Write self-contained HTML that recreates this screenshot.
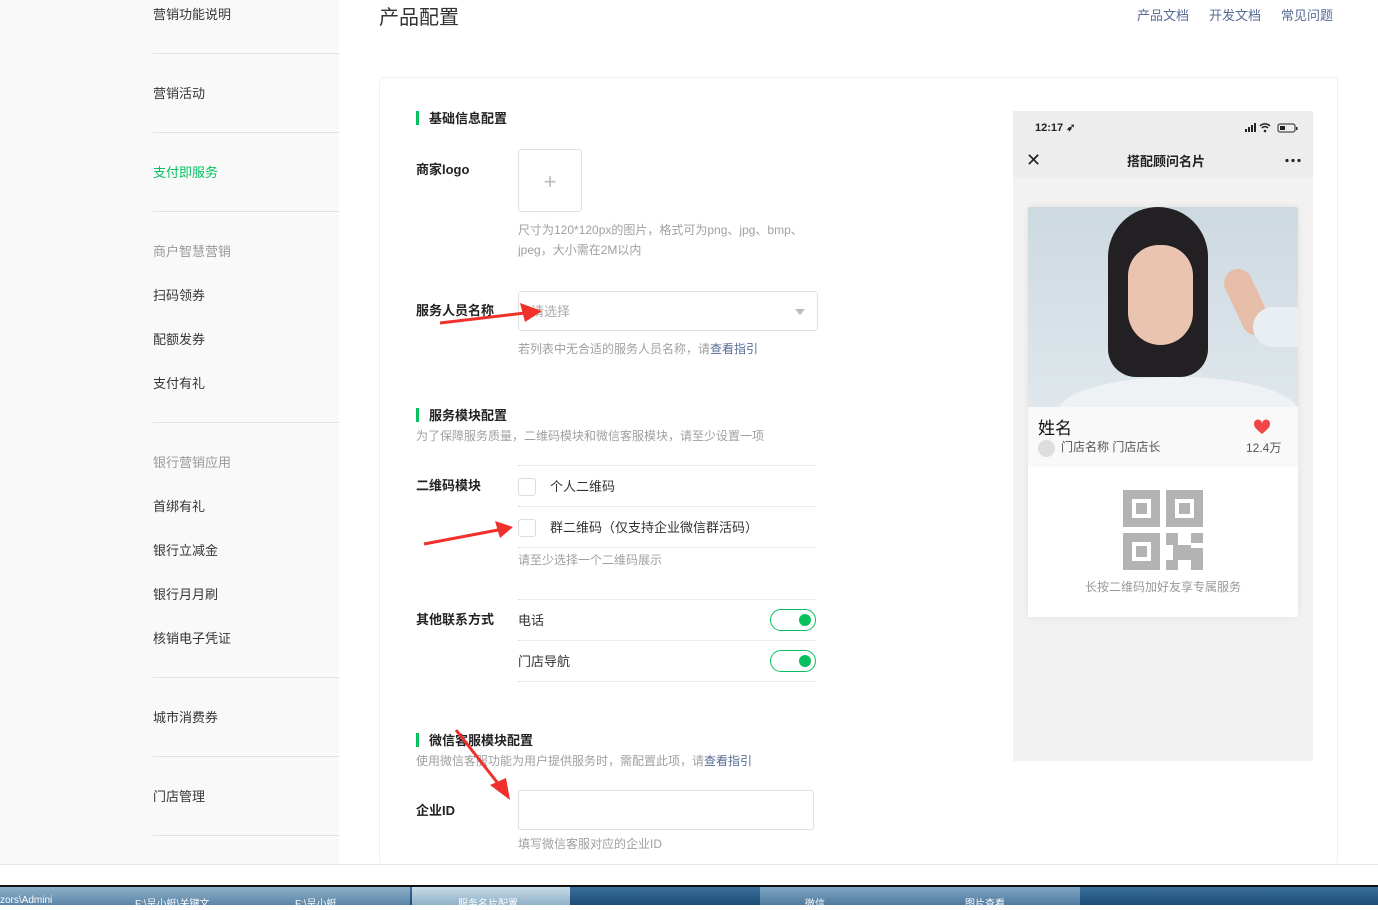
<!DOCTYPE html>
<html><head><meta charset="utf-8"><style>
*{margin:0;padding:0;box-sizing:border-box}
body{width:1378px;height:905px;overflow:hidden;background:#fff;font-family:"Liberation Sans","Noto Sans CJK SC",sans-serif;font-size:13px;color:#333;position:relative}
.a{position:absolute;white-space:nowrap}
.side{position:absolute;left:0;top:0;width:339px;height:864px;background:#f9f9f9}
.sl{position:absolute;left:153px;width:186px;height:1px;background:#e2e2e2}
.si{position:absolute;left:153px;font-size:13px;color:#353535;margin-top:-2px}
.g{color:#999}
.h{font-weight:bold;color:#222;font-size:13px;margin-top:-2px}
.bar{position:absolute;width:3px;height:14px;background:#07c160}
.tip{font-size:12px;color:#a0a0a0;margin-top:-2px}
.lk{color:#576b95}
.dl{position:absolute;left:518px;width:298px;border-top:1px dotted #ddd}
.cb{position:absolute;left:518px;width:18px;height:18px;border:1px solid #ddd;border-radius:3px;background:#fff}
.sw{position:absolute;left:770px;width:46px;height:22px;border:1.5px solid #07c160;border-radius:11px;background:#fff}
.sw:after{content:"";position:absolute;right:4px;top:4px;width:12px;height:12px;border-radius:50%;background:#07c160}
.t{margin-top:-2px}
</style></head><body>
<div class="side"></div>
<div class="si" style="top:6px">营销功能说明</div>
<div class="sl" style="top:53px"></div>
<div class="si" style="top:85px">营销活动</div>
<div class="sl" style="top:132px"></div>
<div class="si" style="top:164px;color:#07c160">支付即服务</div>
<div class="sl" style="top:211px"></div>
<div class="si g" style="top:243px">商户智慧营销</div>
<div class="si" style="top:287px">扫码领券</div>
<div class="si" style="top:331px">配额发券</div>
<div class="si" style="top:375px">支付有礼</div>
<div class="sl" style="top:422px"></div>
<div class="si g" style="top:454px">银行营销应用</div>
<div class="si" style="top:498px">首绑有礼</div>
<div class="si" style="top:542px">银行立减金</div>
<div class="si" style="top:586px">银行月月刷</div>
<div class="si" style="top:630px">核销电子凭证</div>
<div class="sl" style="top:677px"></div>
<div class="si" style="top:709px">城市消费券</div>
<div class="sl" style="top:756px"></div>
<div class="si" style="top:788px">门店管理</div>
<div class="sl" style="top:835px"></div>

<div class="a" style="left:379px;top:1px;font-size:20px;color:#333">产品配置</div>
<div class="a lk" style="left:1137px;top:5px">产品文档</div>
<div class="a lk" style="left:1209px;top:5px">开发文档</div>
<div class="a lk" style="left:1281px;top:5px">常见问题</div>

<div style="position:absolute;left:379px;top:77px;width:959px;height:787px;border:1px solid #f0f0f0;border-radius:4px;border-bottom:none"></div>

<div class="bar" style="left:416px;top:111px"></div>
<div class="a h" style="left:429px;top:110px">基础信息配置</div>
<div class="a h" style="left:416px;top:161px">商家logo</div>
<div style="position:absolute;left:518px;top:149px;width:64px;height:63px;border:1px solid #e0e0e0;border-radius:3px;color:#bbb;font-size:22px;text-align:center;line-height:64px;font-weight:300">+</div>
<div class="a tip" style="left:518px;top:222px;line-height:20px">尺寸为120*120px的图片，格式可为png、jpg、bmp、<br>jpeg，大小需在2M以内</div>
<div class="a h" style="left:416px;top:302px">服务人员名称</div>
<div style="position:absolute;left:518px;top:291px;width:300px;height:40px;border:1px solid #e0e0e0;border-radius:3px"></div>
<div class="a t" style="left:531px;top:303px;color:#aaa">请选择</div>
<div class="a" style="left:795px;top:309px;border-left:5px solid transparent;border-right:5px solid transparent;border-top:6px solid #bbb"></div>
<div class="a tip" style="left:518px;top:342px">若列表中无合适的服务人员名称，请<span class="lk">查看指引</span></div>

<div class="bar" style="left:416px;top:408px"></div>
<div class="a h" style="left:429px;top:407px">服务模块配置</div>
<div class="a tip" style="left:416px;top:429px">为了保障服务质量，二维码模块和微信客服模块，请至少设置一项</div>
<div class="dl" style="top:465px"></div>
<div class="a h" style="left:416px;top:477px">二维码模块</div>
<div class="cb" style="top:478px"></div>
<div class="a t" style="left:550px;top:478px">个人二维码</div>
<div class="dl" style="top:506px"></div>
<div class="cb" style="top:519px"></div>
<div class="a t" style="left:550px;top:519px">群二维码（仅支持企业微信群活码）</div>
<div class="dl" style="top:547px"></div>
<div class="a tip" style="left:518px;top:553px">请至少选择一个二维码展示</div>
<div class="dl" style="top:599px"></div>
<div class="a h" style="left:416px;top:611px">其他联系方式</div>
<div class="a t" style="left:518px;top:612px">电话</div>
<div class="sw" style="top:609px"></div>
<div class="dl" style="top:640px"></div>
<div class="a t" style="left:518px;top:653px">门店导航</div>
<div class="sw" style="top:650px"></div>
<div class="dl" style="top:681px"></div>

<div class="bar" style="left:416px;top:733px"></div>
<div class="a h" style="left:429px;top:732px">微信客服模块配置</div>
<div class="a tip" style="left:416px;top:754px">使用微信客服功能为用户提供服务时，需配置此项，请<span class="lk">查看指引</span></div>
<div class="a h" style="left:416px;top:802px">企业ID</div>
<div style="position:absolute;left:518px;top:790px;width:296px;height:40px;border:1px solid #e0e0e0;border-radius:3px"></div>
<div class="a tip" style="left:518px;top:837px">填写微信客服对应的企业ID</div>

<svg class="a" style="left:0;top:0" width="1378" height="905">
<g fill="#f0302a" stroke="#f0302a">
<line x1="440" y1="323" x2="525" y2="313" stroke-width="3"/><polygon points="520,303 542,311 525,322" stroke="none"/>
<line x1="424" y1="544" x2="498" y2="530" stroke-width="3"/><polygon points="495,521 513,527 500,538" stroke="none"/>
<line x1="456" y1="730" x2="500" y2="786" stroke-width="3"/><polygon points="490,785 510,800 506,778" stroke="none"/>
</g></svg>

<!-- phone -->
<div style="position:absolute;left:1013px;top:111px;width:300px;height:650px;background:#f2f2f2"></div>
<div style="position:absolute;left:1013px;top:111px;width:300px;height:66px;background:#ededed"></div>
<div class="a" style="left:1035px;top:121px;font-size:11px;font-weight:bold;color:#222">12:17 ➶</div>
<svg class="a" style="left:1244px;top:122px" width="56" height="12">
<rect x="1" y="7" width="2" height="3" fill="#222"/><rect x="4" y="5" width="2" height="5" fill="#222"/><rect x="7" y="3" width="2" height="7" fill="#222"/><rect x="10" y="1" width="2" height="9" fill="#222"/>
<path d="M16 4a7 7 0 0 1 10 0M18 6a4 4 0 0 1 6 0" stroke="#222" stroke-width="1.5" fill="none"/><circle cx="21" cy="9" r="1.3" fill="#222"/>
<rect x="34" y="2" width="17" height="8" rx="2" stroke="#222" fill="none"/><rect x="36" y="4" width="5" height="4" fill="#222"/><rect x="52" y="5" width="1.5" height="3" fill="#222"/>
</svg>
<div class="a" style="left:1026px;top:150px;font-size:18px;color:#222">✕</div>
<div class="a" style="left:1127px;top:151px;font-weight:bold;color:#222">搭配顾问名片</div>
<svg class="a" style="left:1285px;top:158px" width="16" height="5"><circle cx="2" cy="2.5" r="1.6" fill="#222"/><circle cx="8" cy="2.5" r="1.6" fill="#222"/><circle cx="14" cy="2.5" r="1.6" fill="#222"/></svg>
<div style="position:absolute;left:1028px;top:207px;width:270px;height:410px;background:#fff;box-shadow:0 0 8px rgba(0,0,0,.08);border-radius:2px;overflow:hidden">
 <div style="position:absolute;left:0;top:0;width:270px;height:200px;background:linear-gradient(#cdd9e0,#dfe7ec);overflow:hidden">
  <div style="position:absolute;left:80px;top:0;width:100px;height:170px;border-radius:50px 50px 28px 28px;background:#222022"></div>
  <div style="position:absolute;left:100px;top:38px;width:65px;height:100px;border-radius:34px 34px 36px 36px;background:#eac3b1"></div>
  <div style="position:absolute;left:30px;top:170px;width:240px;height:70px;border-radius:50%;background:#eef2f4"></div>
  <div style="position:absolute;left:205px;top:60px;width:28px;height:70px;border-radius:14px;background:#e6bda8;transform:rotate(-25deg)"></div>
  <div style="position:absolute;left:225px;top:100px;width:60px;height:40px;border-radius:20px;background:#e8eef1"></div>
 </div>
 <div style="position:absolute;left:0;top:200px;width:270px;height:60px;background:#f9f9f9"></div>
 <div class="a" style="left:10px;top:207px;font-size:17px;color:#111">姓名</div>
 <div class="a" style="left:10px;top:233px;width:17px;height:17px;border-radius:50%;background:#ddd"></div>
 <div class="a" style="left:33px;top:231px;font-size:12px;color:#555">门店名称 门店店长</div>
 <svg class="a" style="left:225px;top:212px" width="18" height="16"><path d="M9 15C3 10 1 8 1 5a4 4 0 0 1 8-1 4 4 0 0 1 8 1c0 3-2 5-8 10z" fill="#f04848"/></svg>
 <div class="a" style="left:218px;top:232px;font-size:12px;color:#555">12.4万</div>
 <svg class="a" style="left:95px;top:283px" width="80" height="80" fill="#b3b3b3">
  <path fill-rule="evenodd" d="M0 0h37v37H0zM9 9v19h19V9zM43 0h37v37H43zM52 9v19h19V9zM0 43h37v37H0zM9 52v19h19V52z"/>
  <rect x="13" y="13" width="11" height="11"/><rect x="56" y="13" width="11" height="11"/><rect x="13" y="56" width="11" height="11"/>
  <rect x="43" y="43" width="12" height="12"/><rect x="68" y="43" width="12" height="10"/><rect x="50" y="55" width="18" height="15"/><rect x="68" y="58" width="12" height="22"/><rect x="43" y="70" width="12" height="10"/>
 </svg>
 <div class="a" style="left:57px;top:371px;font-size:12px;color:#999">长按二维码加好友享专属服务</div>
</div>

<!-- bottom -->
<div style="position:absolute;left:0;top:864px;width:1378px;height:1px;background:#e6e6e6"></div>
<div style="position:absolute;left:0;top:885px;width:1378px;height:20px;background:linear-gradient(#3a6e9a,#1d4c78);border-top:2px solid #111"></div>
<div style="position:absolute;left:0;top:887px;width:410px;height:18px;background:linear-gradient(#8fb0c8,#5a85a8)"></div>
<div style="position:absolute;left:412px;top:887px;width:158px;height:18px;background:linear-gradient(#c8dbe8,#8fb0c8)"></div>
<div style="position:absolute;left:760px;top:887px;width:320px;height:18px;background:linear-gradient(#7fa5c2,#4f7ba0)"></div>
<div class="a" style="left:0;top:895px;font-size:10px;color:#fff">zors\Admini</div>
<div class="a" style="left:135px;top:895px;font-size:10px;color:#fff">F:\呈小蜓\关键文</div>
<div class="a" style="left:295px;top:895px;font-size:10px;color:#fff">F:\呈小蜓</div>
<div class="a" style="left:458px;top:895px;font-size:10px;color:#fff">服务名片配置</div>
<div class="a" style="left:805px;top:895px;font-size:10px;color:#fff">微信</div>
<div class="a" style="left:965px;top:895px;font-size:10px;color:#fff">图片查看</div>
</body></html>
